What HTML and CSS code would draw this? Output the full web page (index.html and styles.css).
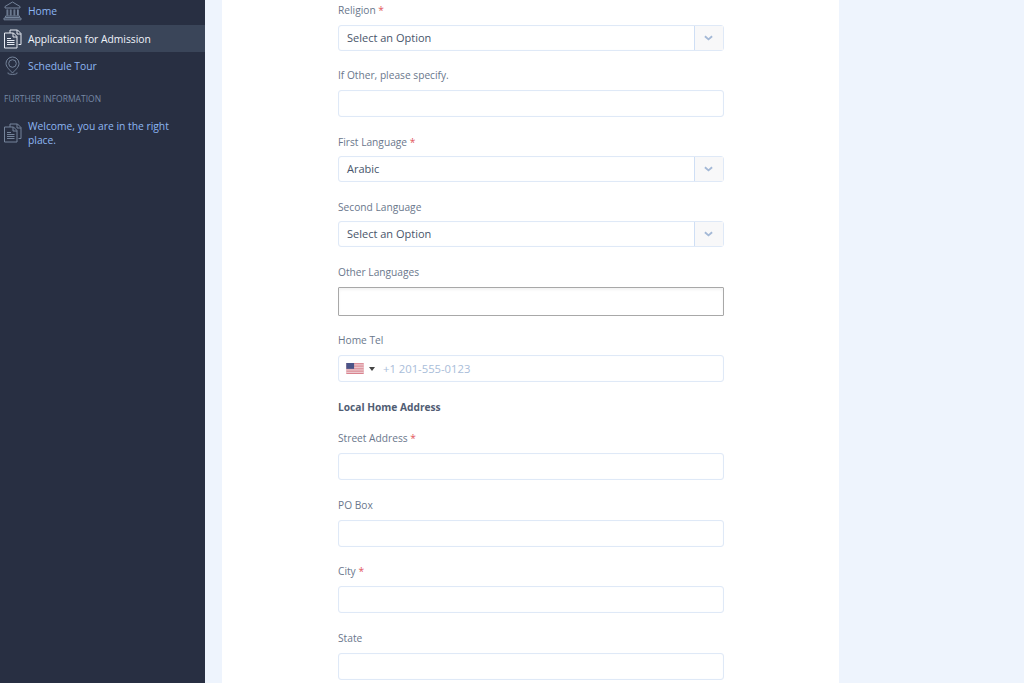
FILE: index.html
```html
<!DOCTYPE html>
<html lang="en">
<head>
<meta charset="utf-8">
<title>Application for Admission</title>
<link rel="stylesheet" href="styles.css">
</head>
<body>
<div class="app">
  <aside class="sidebar">
    <a class="nav-item nav-first">
      <svg class="nav-icon" viewBox="0 0 20 20"><path d="M9.500 1 2 5.500V7h15V5.500zM4 8.500v6M4.800 8.500v6M7.300 8.500v6M8.100 8.500v6M11 8.500v6M11.800 8.500v6M14.500 8.500v6M15.300 8.500v6M2.500 15h14v1.500h-14zM1 17h17v1.800H1z"/></svg>
      <span>Home</span>
    </a>
    <a class="nav-item nav-active">
      <svg class="nav-icon" viewBox="0 0 20 20"><path d="M7 4V1h7.500L18 4.500V15.500h-2.500M14 1v4h4M1.500 4h9l3.500 3.500V19H1.500zM10 4v4h4M4 9.500h4M4 11.500h7.500M4 13.500h7.500M4 15.500h7.500"/></svg>
      <span>Application for Admission</span>
    </a>
    <a class="nav-item">
      <svg class="nav-icon" viewBox="0 0 20 20"><path d="M9.500 1a6.500 6.500 0 0 0-6.500 6.500c0 3.500 3.800 6.500 6.500 9.500 2.700-3 6.500-6 6.500-9.500A6.500 6.500 0 0 0 9.500 1z"/><circle cx="9.500" cy="7.500" r="3.800"/><path d="M5 16.500c-2 2.500 11 2.500 9 0"/></svg>
      <span>Schedule Tour</span>
    </a>
    <div class="nav-heading">FURTHER INFORMATION</div>
    <a class="nav-item nav-multi">
      <svg class="nav-icon" viewBox="0 0 20 20"><path d="M7 4V1h7.500L18 4.500V15.500h-2.500M14 1v4h4M1.500 4h9l3.500 3.500V19H1.500zM10 4v4h4M4 9.500h4M4 11.500h7.500M4 13.500h7.500M4 15.500h7.500"/></svg>
      <span>Welcome, you are in the right place.</span>
    </a>
  </aside>
  <main class="main">
    <section class="card">
      <form class="form">
        <div class="field"><label class="label">Religion <em>*</em></label>
          <div class="select"><span class="select-value">Select an Option</span><span class="select-btn"><svg viewBox="0 0 10 6"><path d="M1 1l4 3.500L9 1"/></svg></span></div></div>
        <div class="field"><label class="label">If Other, please specify.</label><div class="input"></div></div>
        <div class="field"><label class="label">First Language <em>*</em></label>
          <div class="select"><span class="select-value">Arabic</span><span class="select-btn"><svg viewBox="0 0 10 6"><path d="M1 1l4 3.500L9 1"/></svg></span></div></div>
        <div class="field"><label class="label">Second Language</label>
          <div class="select"><span class="select-value">Select an Option</span><span class="select-btn"><svg viewBox="0 0 10 6"><path d="M1 1l4 3.500L9 1"/></svg></span></div></div>
        <div class="field"><label class="label">Other Languages</label><div class="input input-focus"></div></div>
        <div class="field"><label class="label">Home Tel</label>
          <div class="input input-tel">
            <svg class="flag" viewBox="0 0 19 12"><rect width="19" height="12" fill="#d9828c"/><path d="M0 1.400h19M0 3.200h19M0 5h19M0 6.800h19M0 8.600h19M0 10.400h19" stroke="#f4e6ea" stroke-width=".8"/><rect width="8.500" height="6.400" fill="#4a5488"/></svg>
            <span class="caret"></span>
            <span class="placeholder">+1 201-555-0123</span>
          </div></div>
        <div class="subhead">Local Home Address</div>
        <div class="field"><label class="label">Street Address <em>*</em></label><div class="input"></div></div>
        <div class="field"><label class="label">PO Box</label><div class="input"></div></div>
        <div class="field"><label class="label">City <em>*</em></label><div class="input"></div></div>
        <div class="field"><label class="label">State</label><div class="input"></div></div>
      </form>
    </section>
  </main>
</div>
</body>
</html>
```
FILE: styles.css
```css
* { box-sizing: border-box; }
html, body { margin: 0; height: 683px; overflow: hidden; }
body { font-family: "Open Sans", sans-serif; font-size: 10.300px; background: #eef4fd; color: #5c6a80; }
.app { display: flex; height: 683px; }
.sidebar { width: 205px; flex: none; background: #282f42; }
.nav-item { display: flex; align-items: center; gap: 5px; height: 27px; padding-left: 3px; color: #8db6f2; font-size: 10.300px; line-height: 14px; }
.nav-first { height: 25px; padding-bottom: 3px; }
.nav-active { background: #3a4559; color: #f0f4fb; }
.nav-active .nav-icon { stroke: #e6ebf3; }
.nav-icon { width: 20px; height: 20px; flex: none; fill: none; stroke: #75849b; stroke-width: 1; }
.nav-heading { margin-top: 12px; padding-left: 4px; height: 16px; line-height: 16px; font-size: 8.500px; color: #7688a5; }
.nav-multi { height: 29px; margin-top: 11px; padding-right: 20px; }
.main { flex: 1; padding-left: 17px; }
.card { width: 617px; height: 683px; background: #fff; padding-left: 116px; overflow: hidden; }
.form { width: 386px; padding-top: 3px; }
.field { margin-bottom: 17.500px; }
.label { display: block; height: 15px; line-height: 15px; font-size: 10.200px; color: #6a778c; margin-bottom: 7px; }
.label em { font-style: normal; color: #e2565e; }
.select { display: flex; height: 26px; margin-top: -0.500px; border: 1px solid #dfe9f7; border-radius: 3px; background: #fff; box-shadow: inset 0 0 1px #e6eefa; }
.select-value { flex: 1; padding-left: 8px; line-height: 23px; font-size: 11px; color: #48556a; }
.select-btn { width: 29px; display: flex; align-items: center; justify-content: center; padding-right: 2px; border-left: 1px solid #cfdff5; background: #f8f8f9; }
.select-btn svg { width: 9px; height: 6px; fill: none; stroke: #a3b8d6; stroke-width: 2; }
.input { height: 27px; border: 1px solid #dfe9f7; border-radius: 3px; background: #fff; box-shadow: inset 0 0 1px #e6eefa; }
.input-focus { height: 29px; border-color: #a8a8a8; border-radius: 1px; box-shadow: inset 0 2px 3px rgba(0, 0, 0, .05); }
.input-tel { display: flex; align-items: center; padding-left: 7px; }
.flag { width: 18px; height: 11px; }
.caret { margin-left: 5px; border-left: 3px solid transparent; border-right: 3px solid transparent; border-top: 4px solid #444; }
.placeholder { margin-left: 8px; font-size: 11.250px; color: #a9bdd9; }
.subhead { height: 15px; line-height: 15px; margin: 0 0 16.500px; font-size: 10.200px; font-weight: 700; color: #505d73; }
```
